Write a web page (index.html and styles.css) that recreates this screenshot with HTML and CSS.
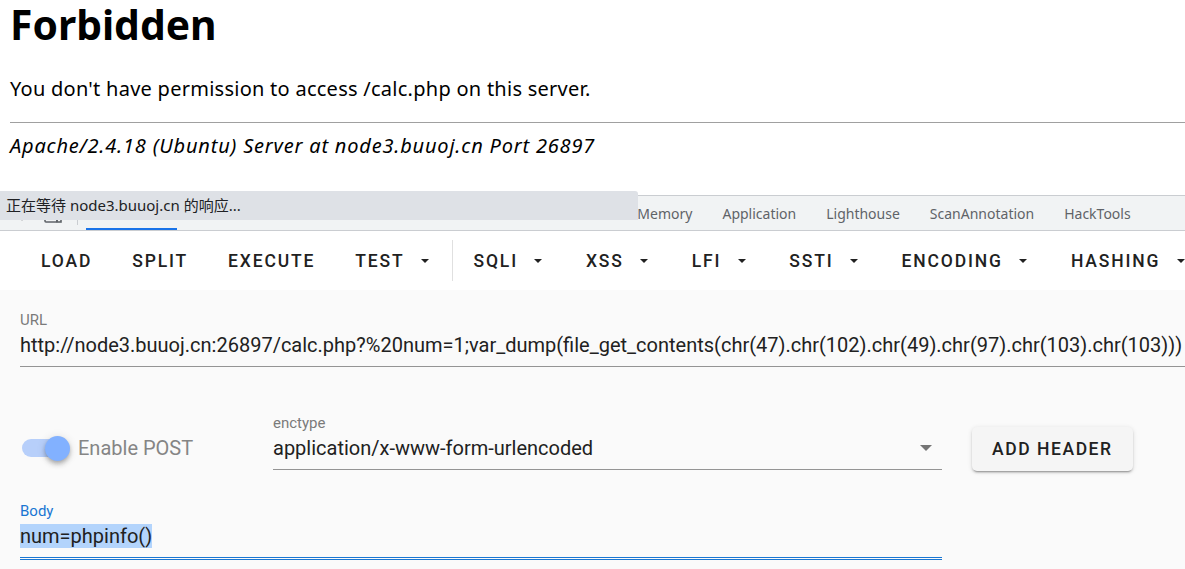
FILE: index.html
```html
<!DOCTYPE html>
<html lang="en">
<head>
<meta charset="utf-8">
<title>403 Forbidden</title>
<link rel="stylesheet" href="styles.css">
</head>
<body>
<div class="page">
  <h1 class="title">Forbidden</h1>
  <p class="msg">You don't have permission to access /calc.php on this server.</p>
  <hr class="rule">
  <address class="sig">Apache/2.4.18 (Ubuntu) Server at node3.buuoj.cn Port 26897</address>
</div>

<div class="devtools">
  <div class="tabbar">
    <div class="dt-icons">
      <svg class="dt-icon" width="20" height="20" viewBox="0 0 20 20"><path d="M3 3h12v6M3 3v12h6" fill="none" stroke="#5f6368" stroke-width="1.6"/><path d="M10 10l8 3-3.5 1.5L13 18z" fill="#5f6368"/></svg>
      <svg class="dt-icon" width="20" height="20" viewBox="0 0 20 20"><rect x="2" y="3" width="12" height="16" rx="1" fill="none" stroke="#5f6368" stroke-width="1.6"/><rect x="14" y="8" width="4" height="11" fill="none" stroke="#5f6368" stroke-width="1.6"/></svg>
    </div>
    <span class="dt-sep"></span>
    <div class="tab active">Elements</div>
    <div class="tab">Console</div>
    <div class="tab">Sources</div>
    <div class="tab">Network</div>
    <div class="tab">Performance</div>
    <div class="tab tight">Recorder</div>
    <div class="tab">Memory</div>
    <div class="tab">Application</div>
    <div class="tab">Lighthouse</div>
    <div class="tab">ScanAnnotation</div>
    <div class="tab">HackTools</div>
  </div>

  <div class="hacktools">
    <div class="toolbar">
      <div class="tb-btn">Load</div>
      <div class="tb-btn">Split</div>
      <div class="tb-btn">Execute</div>
      <div class="tb-btn">Test<span class="caret"></span></div>
      <span class="tb-divider"></span>
      <div class="tb-btn">SQLI<span class="caret"></span></div>
      <div class="tb-btn">XSS<span class="caret"></span></div>
      <div class="tb-btn">LFI<span class="caret"></span></div>
      <div class="tb-btn">SSTI<span class="caret"></span></div>
      <div class="tb-btn">Encoding<span class="caret"></span></div>
      <div class="tb-btn">Hashing<span class="caret"></span></div>
    </div>

    <div class="content">
      <div class="field url-field">
        <div class="field-label">URL</div>
        <div class="field-value">http://node3.buuoj.cn:26897/calc.php?%20num=1;var_dump(file_get_contents(chr(47).chr(102).chr(49).chr(97).chr(103).chr(103)))</div>
      </div>

      <div class="form-grid">
        <div class="switch-cell">
          <div class="switch-line">
            <span class="switch"><span class="track"></span><span class="thumb"></span></span>
            <span class="switch-label">Enable POST</span>
          </div>
        </div>
        <div class="field">
          <div class="field-label">enctype</div>
          <div class="field-value select-value">
            <span>application/x-www-form-urlencoded</span>
            <span class="select-arrow"></span>
          </div>
        </div>
        <div class="btn-cell">
          <div class="raised-btn">Add Header</div>
        </div>
        <div class="field body-field">
          <div class="field-label focused">Body</div>
          <div class="field-value focused-value"><span class="selected">num=phpinfo()</span></div>
        </div>
      </div>
    </div>
  </div>
</div>

<div class="status">正在等待 node3.buuoj.cn 的响应...</div>
</body>
</html>
```

FILE: styles.css
```css
* {
  box-sizing: border-box;
}

html, body {
  margin: 0;
  padding: 0;
}

body {
  width: 1185px;
  height: 569px;
  overflow: hidden;
  position: relative;
  background: #ffffff;
  color: #000000;
  font-family: "Noto Sans", "Noto Sans CJK SC", sans-serif;
}

/* ---------- Apache error page ---------- */
.page {
  height: 195px;
  padding: 0 0 0 10px;
}

.title {
  margin: 0;
  font-size: 40.8px;
  font-weight: 700;
  line-height: 49px;
}

.msg {
  margin: 26px 0 0;
  font-size: 20px;
  line-height: 28px;
  letter-spacing: 0.26px;
}

.rule {
  margin: 19px 0 0;
  height: 0;
  border: 0;
  border-top: 1px solid #a0a0a0;
}

.sig {
  margin: 9px 0 0;
  font-size: 20px;
  line-height: 28px;
  font-style: italic;
  letter-spacing: 0.8px;
}

/* ---------- DevTools ---------- */
.devtools {
  height: 374px;
  display: flex;
  flex-direction: column;
}

.tabbar {
  height: 36px;
  flex: none;
  display: flex;
  align-items: stretch;
  background: #f1f3f4;
  border-top: 1px solid #cacdd1;
  border-bottom: 1px solid #cacdd1;
  font-size: 14px;
  color: #5f6368;
  white-space: nowrap;
}

.dt-icons {
  display: flex;
  align-items: center;
  gap: 14px;
  padding-left: 9px;
  width: 77px;
}

.dt-sep {
  width: 1px;
  margin: 7px 8px 5px 0;
  background: #cacdd1;
}

.tab {
  display: flex;
  align-items: center;
  padding: 0 15px;
  position: relative;
}

.tab.tight {
  padding: 0 10px;
}

.tab.active::after {
  content: "";
  position: absolute;
  left: 0;
  right: 0;
  bottom: 0;
  height: 2px;
  background: #1a73e8;
}

/* ---------- HackTools panel ---------- */
.hacktools {
  flex: 1;
  display: flex;
  flex-direction: column;
  background: #fafafa;
  min-height: 0;
}

.toolbar {
  height: 59px;
  flex: none;
  display: flex;
  align-items: center;
  padding-left: 21px;
  background: #ffffff;
  font-family: Roboto, "Noto Sans", sans-serif;
  font-weight: 500;
  font-size: 17.5px;
  letter-spacing: 1.85px;
  text-transform: uppercase;
  color: #212121;
  white-space: nowrap;
}

.tb-btn {
  display: flex;
  align-items: center;
  height: 45px;
  padding: 0 20px;
  flex: none;
}

.caret {
  width: 0;
  height: 0;
  border-left: 4px solid transparent;
  border-right: 4px solid transparent;
  border-top: 4.5px solid #212121;
  margin-left: 16.5px;
  margin-right: 3.5px;
}

.tb-divider {
  width: 1px;
  align-self: stretch;
  margin: 9px 0;
  background: #e0e0e0;
  flex: none;
}

.content {
  flex: 1;
  padding: 20px 0 0 20px;
  font-family: Roboto, "Noto Sans", sans-serif;
}

.field-label {
  font-size: 15px;
  line-height: 20px;
  color: #7a7a7a;
}

.field-label.focused {
  color: #1976d2;
}

.field-value {
  font-size: 20px;
  line-height: 30px;
  color: #212121;
  padding-bottom: 6px;
  border-bottom: 1px solid #949494;
  white-space: nowrap;
}

.url-field .field-value {
  margin-right: -40px;
}

.form-grid {
  margin-top: 46px;
  display: grid;
  grid-template-columns: 253px 669px auto;
  row-gap: 30px;
  align-items: start;
}

.switch-cell {
  padding-top: 20px;
}

.switch-line {
  display: flex;
  align-items: center;
  height: 30px;
}

.switch {
  position: relative;
  width: 48px;
  height: 25px;
  margin-left: 2px;
}

.track {
  position: absolute;
  left: 0;
  top: 3.5px;
  width: 44px;
  height: 18px;
  border-radius: 9px;
  background: #b7cffa;
}

.thumb {
  position: absolute;
  right: 0;
  top: 0;
  width: 25px;
  height: 25px;
  border-radius: 50%;
  background: #82b1ff;
  box-shadow: 0 2px 4px -1px rgba(0,0,0,.2), 0 4px 5px 0 rgba(0,0,0,.14), 0 1px 10px 0 rgba(0,0,0,.12);
}

.switch-label {
  margin-left: 8px;
  font-size: 20px;
  color: #858585;
}

.select-value {
  display: flex;
  align-items: center;
  justify-content: space-between;
}

.select-arrow {
  width: 0;
  height: 0;
  border-left: 6px solid transparent;
  border-right: 6px solid transparent;
  border-top: 6px solid #757575;
  margin-right: 10px;
}

.btn-cell {
  padding-left: 30px;
  padding-top: 14px;
}

.raised-btn {
  display: inline-flex;
  align-items: center;
  height: 44px;
  padding: 0 20px;
  border-radius: 5px;
  background: #f5f5f5;
  box-shadow: 0 3px 1px -2px rgba(0,0,0,.2), 0 2px 2px 0 rgba(0,0,0,.14), 0 1px 5px 0 rgba(0,0,0,.12);
  font-weight: 500;
  font-size: 17.5px;
  letter-spacing: 1.56px;
  text-transform: uppercase;
  color: #212121;
  white-space: nowrap;
}

.body-field {
  grid-column: 1 / span 2;
}

.body-field .focused-value {
  border-bottom: 1px solid #1976d2;
}

.body-field::after {
  content: "";
  display: block;
  height: 1px;
  margin-top: 1px;
  background: #1976d2;
}

.selected {
  background: #b3d4fc;
}

/* ---------- Chrome status bubble ---------- */
.status {
  position: absolute;
  left: 0;
  top: 191px;
  width: 638px;
  height: 29px;
  padding-left: 6px;
  background: #dee1e6;
  border-top-right-radius: 3px;
  font-size: 15px;
  line-height: 29px;
  color: #202124;
  white-space: nowrap;
}
```
